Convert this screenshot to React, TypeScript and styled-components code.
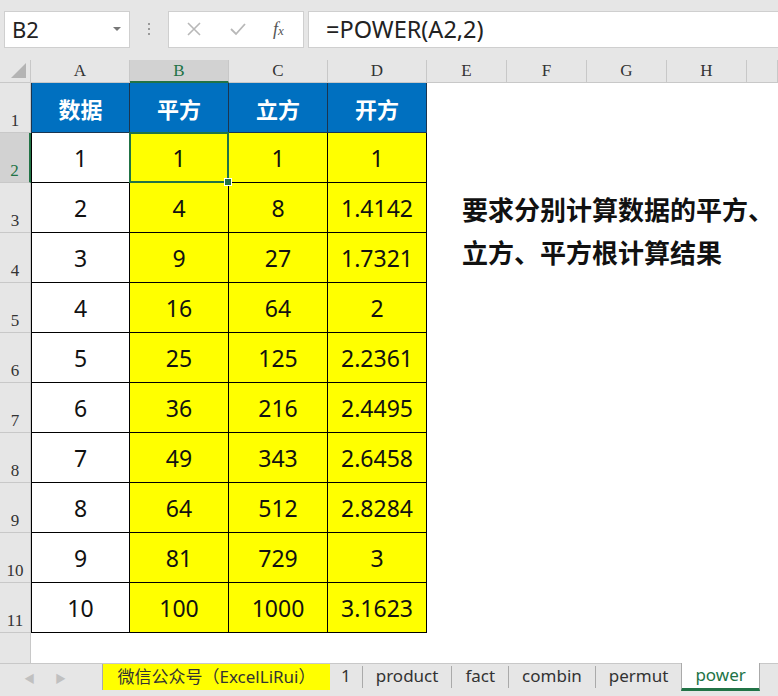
import React from 'react'
import styled, { createGlobalStyle } from 'styled-components'

const GlobalStyle = createGlobalStyle`
  html, body {
    margin: 0;
    padding: 0;
    overflow: hidden;
    background: #e6e6e6;
  }
`

const Window = styled.div`
  width: 778px;
  height: 696px;
  display: flex;
  flex-direction: column;
  background: #e6e6e6;
  font-family: 'Noto Sans', 'Noto Sans CJK SC', sans-serif;
  overflow: hidden;
`

const FormulaBar = styled.div`
  height: 60px;
  display: flex;
  align-items: center;
  padding: 0 0 2px 4px;
  box-sizing: border-box;
`

const NameBox = styled.div`
  width: 126px;
  height: 37px;
  box-sizing: border-box;
  background: #fff;
  border: 1px solid #cfcfcf;
  display: flex;
  align-items: center;
  justify-content: space-between;
  padding: 0 8px 0 7px;
  font-size: 22px;
  color: #222;
`

const Caret = styled.span`
  width: 0;
  height: 0;
  border-left: 4px solid transparent;
  border-right: 4px solid transparent;
  border-top: 4px solid #777;
`

const Grip = styled.div`
  width: 38px;
  display: flex;
  flex-direction: column;
  align-items: center;
  gap: 3px;
  span {
    width: 2px;
    height: 2px;
    background: #999;
  }
`

const IconBox = styled.div`
  width: 136px;
  height: 37px;
  box-sizing: border-box;
  background: #fff;
  border: 1px solid #cfcfcf;
  display: flex;
  align-items: center;
  justify-content: space-around;
  padding: 0 6px 0 4px;
  color: #b8b8b8;
`

const Fx = styled.span`
  font-family: 'Liberation Serif', serif;
  font-style: italic;
  font-size: 18px;
  color: #555;
  span {
    font-size: 13px;
  }
`

const FormulaInput = styled.div`
  flex: 1;
  margin-left: 4px;
  height: 37px;
  box-sizing: border-box;
  background: #fff;
  border: 1px solid #cfcfcf;
  border-right: none;
  display: flex;
  align-items: center;
  padding-left: 17px;
  font-size: 23.5px;
  color: #222;
`

const Sheet = styled.div`
  flex: 1;
  display: grid;
  grid-template-columns: 31px repeat(4, 99px) repeat(4, 80px) 1fr;
  grid-template-rows: 23px repeat(11, 50px) 1fr;
  background: #fff;
  min-height: 0;
`

const Corner = styled.div`
  background: #e6e6e6;
  border-right: 1px solid #c8c8c8;
  border-bottom: 1px solid #c8c8c8;
  position: relative;
  &::after {
    content: '';
    position: absolute;
    right: 4px;
    bottom: 4px;
    border-left: 15px solid transparent;
    border-bottom: 15px solid #b4b4b4;
  }
`

const ColHead = styled.div<{ $active?: boolean }>`
  background: ${({ $active }) => ($active ? '#d2d2d2' : '#e6e6e6')};
  border-right: 1px solid #c8c8c8;
  border-bottom: ${({ $active }) => ($active ? '2px solid #217346' : '1px solid #c8c8c8')};
  box-sizing: border-box;
  display: flex;
  align-items: center;
  justify-content: center;
  font-family: 'Liberation Serif', serif;
  font-size: 17px;
  color: ${({ $active }) => ($active ? '#217346' : '#333')};
`

const RowHead = styled.div<{ $active?: boolean }>`
  grid-column: 1;
  background: ${({ $active }) => ($active ? '#d2d2d2' : '#e6e6e6')};
  border-right: ${({ $active }) => ($active ? '2px solid #217346' : '1px solid #c8c8c8')};
  border-bottom: 1px solid #c8c8c8;
  box-sizing: border-box;
  display: flex;
  align-items: flex-end;
  justify-content: center;
  padding-bottom: 1px;
  font-family: 'Liberation Serif', serif;
  font-size: 17px;
  color: ${({ $active }) => ($active ? '#217346' : '#333')};
`

const Filler = styled.div`
  grid-column: 1;
  background: #e6e6e6;
  border-right: 1px solid #c8c8c8;
`

const HeadCell = styled.div<{ $first?: boolean }>`
  background: #0070c0;
  color: #fff;
  font-family: 'Noto Sans CJK SC', sans-serif;
  font-weight: 700;
  font-size: 22px;
  display: flex;
  align-items: center;
  justify-content: center;
  border-right: 1px solid #1a3550;
  border-bottom: 1px solid #1a3550;
  border-left: ${({ $first }) => ($first ? '1px solid #1a3550' : 'none')};
`

const Cell = styled.div<{ $fill?: boolean; $selected?: boolean; $first?: boolean }>`
  position: relative;
  background: ${({ $fill }) => ($fill ? '#ffff00' : '#fff')};
  border-right: 1px solid #000;
  border-bottom: 1px solid #000;
  border-left: ${({ $first }) => ($first ? '1px solid #000' : 'none')};
  display: flex;
  align-items: center;
  justify-content: center;
  font-size: 23px;
  color: #111;
  ${({ $selected }) =>
    $selected &&
    `
    &::before {
      content: '';
      position: absolute;
      left: -1px;
      top: -1px;
      right: -1px;
      bottom: -1px;
      border: 2px solid #217346;
    }
    &::after {
      content: '';
      position: absolute;
      right: -4px;
      bottom: -4px;
      width: 6px;
      height: 6px;
      background: #217346;
      border: 1px solid #fff;
      z-index: 1;
    }
  `}
`

const Note = styled.div`
  grid-column: 6 / -1;
  grid-row: 2 / 13;
  padding: 104px 0 0 35px;
  font-family: 'Noto Sans CJK SC', sans-serif;
  font-weight: 700;
  font-size: 26px;
  line-height: 43px;
  color: #111;
  white-space: nowrap;
`

const TabBar = styled.div`
  height: 33px;
  display: flex;
  align-items: flex-start;
  background: #e6e6e6;
  border-top: 1px solid #c8c8c8;
  box-sizing: border-box;
  font-size: 17px;
  color: #333;
`

const Arrows = styled.div`
  width: 102px;
  display: flex;
  gap: 20px;
  padding: 6px 0 0 24px;
  box-sizing: border-box;
  color: #c0c0c0;
  font-size: 11px;
`

const Tab = styled.div<{ $kind?: 'brand' | 'active' }>`
  height: 26px;
  display: flex;
  align-items: center;
  padding: 0 13px 3px;
  border-left: 1px solid #aaa;
  background: ${({ $kind }) => ($kind === 'brand' ? '#ffff00' : $kind === 'active' ? '#fff' : 'transparent')};
  color: ${({ $kind }) => ($kind === 'active' ? '#217346' : '#333')};
  border-bottom: ${({ $kind }) => ($kind === 'active' ? '3px solid #217346' : 'none')};
  box-sizing: border-box;
  ${({ $kind }) => $kind === 'brand' && 'width: 228px; justify-content: center; padding: 0 0 3px;'}
  ${({ $kind }) =>
    $kind === 'active' && 'border-right: 1px solid #aaa; margin-top: -1px; height: 28px; padding: 0 13px 3px;'}
`

const Sep = styled.span`
  width: 1px;
  height: 22px;
  margin-top: 2px;
  background: #aaa;
`

const PlainTab = styled.div<{ $pad?: number }>`
  height: 26px;
  display: flex;
  align-items: center;
  padding: 0 ${({ $pad }) => $pad ?? 13}px 3px;
  box-sizing: border-box;
`

const data = [
  ['1', '1', '1', '1'],
  ['2', '4', '8', '1.4142'],
  ['3', '9', '27', '1.7321'],
  ['4', '16', '64', '2'],
  ['5', '25', '125', '2.2361'],
  ['6', '36', '216', '2.4495'],
  ['7', '49', '343', '2.6458'],
  ['8', '64', '512', '2.8284'],
  ['9', '81', '729', '3'],
  ['10', '100', '1000', '3.1623'],
]

const cols = ['A', 'B', 'C', 'D', 'E', 'F', 'G', 'H']
const tabs = ['product', 'fact', 'combin', 'permut']

export default function App() {
  return (
    <Window>
      <GlobalStyle />
      <FormulaBar>
        <NameBox>
          B2
          <Caret />
        </NameBox>
        <Grip>
          <span />
          <span />
          <span />
        </Grip>
        <IconBox>
          <svg width="16" height="16" viewBox="0 0 16 16">
            <path d="M2 2 L14 14 M14 2 L2 14" stroke="#b8b8b8" strokeWidth="1.6" />
          </svg>
          <svg width="18" height="16" viewBox="0 0 18 16">
            <path d="M2 8 L7 13 L16 3" stroke="#b8b8b8" strokeWidth="1.8" fill="none" />
          </svg>
          <Fx>
            f<span>x</span>
          </Fx>
        </IconBox>
        <FormulaInput>=POWER(A2,2)</FormulaInput>
      </FormulaBar>

      <Sheet>
        <Note>
          要求分别计算数据的平方、
          <br />
          立方、平方根计算结果
        </Note>

        <Corner />
        {cols.map((c) => (
          <ColHead key={c} $active={c === 'B'}>
            {c}
          </ColHead>
        ))}
        <ColHead />

        <RowHead>1</RowHead>
        <HeadCell $first>数据</HeadCell>
        <HeadCell>平方</HeadCell>
        <HeadCell>立方</HeadCell>
        <HeadCell>开方</HeadCell>

        {data.map((row, i) => (
          <React.Fragment key={i}>
            <RowHead $active={i === 0}>{i + 2}</RowHead>
            <Cell $first>{row[0]}</Cell>
            <Cell $fill $selected={i === 0}>
              {row[1]}
            </Cell>
            <Cell $fill>{row[2]}</Cell>
            <Cell $fill>{row[3]}</Cell>
          </React.Fragment>
        ))}
        <Filler />
      </Sheet>

      <TabBar>
        <Arrows>
          <span>◀</span>
          <span>▶</span>
        </Arrows>
        <Tab $kind="brand">微信公众号（ExcelLiRui）</Tab>
        <PlainTab $pad={11}>1</PlainTab>
        {tabs.map((t) => (
          <React.Fragment key={t}>
            <Sep />
            <PlainTab>{t}</PlainTab>
          </React.Fragment>
        ))}
        <Tab $kind="active">power</Tab>
      </TabBar>
    </Window>
  )
}
